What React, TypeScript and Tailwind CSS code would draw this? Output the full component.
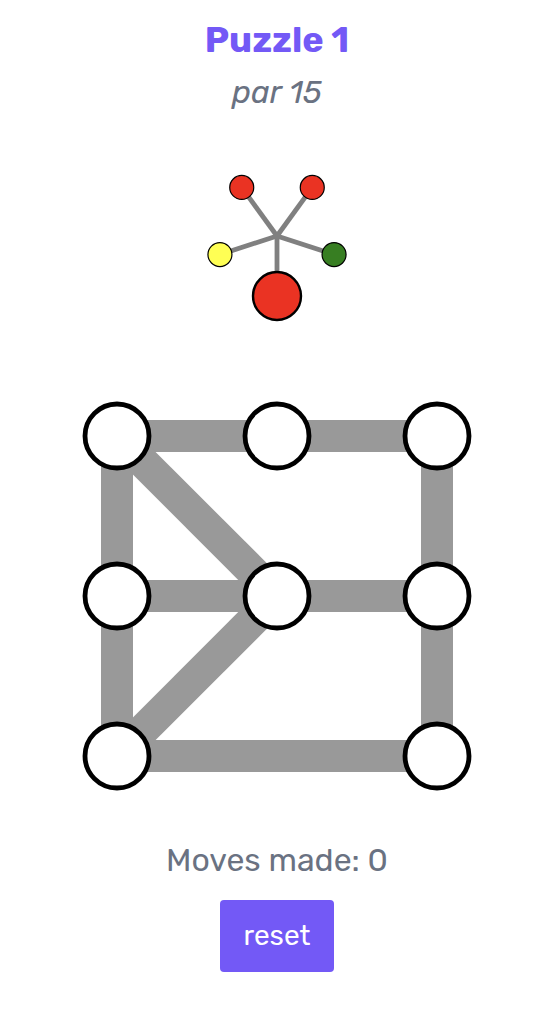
import { useState } from "react";

interface Point { x: number; y: number }

const COLORS: Record<string, string> = {
  red: "#ea3323", green: "#377e22", yellow: "#ffff54",
};

// goal colors, clockwise starting from the bottom
const GOAL = ["red", "yellow", "red", "red", "green"];

const NODES: Point[] = [
  { x: 0, y: 0 }, { x: 1, y: 0 }, { x: 2, y: 0 },
  { x: 0, y: 1 }, { x: 1, y: 1 }, { x: 2, y: 1 },
  { x: 0, y: 2 }, { x: 2, y: 2 },
];

const EDGES: [number, number][] = [
  [0, 1], [1, 2], [0, 3], [0, 4], [3, 4], [4, 5],
  [2, 5], [3, 6], [4, 6], [5, 7], [6, 7],
];

const toBoard = (n: number) => n * 160 + 40;

function GoalWheel() {
  const spokes = GOAL.map((color, i) => {
    const angle = (i * 2 * Math.PI) / GOAL.length;
    return { color, x: 100 - 60 * Math.sin(angle), y: 100 + 60 * Math.cos(angle) };
  });

  return (
    <svg viewBox="0 0 200 200" className="mt-6 w-[200px]" role="img" aria-label="Goal">
      {spokes.map((s, i) => (
        <line key={i} x1={100} y1={100} x2={s.x} y2={s.y} stroke="#808080" strokeWidth={4.8} />
      ))}
      {spokes.map((s, i) => (
        <circle key={i} cx={s.x} cy={s.y} r={i === 0 ? 24 : 12} fill={COLORS[s.color]} stroke="black" strokeWidth={i === 0 ? 2.4 : 1.2} />
      ))}
    </svg>
  );
}

function Board() {
  return (
    <svg viewBox="0 0 400 400" className="mt-[60px] w-full max-w-[400px]" role="img" aria-label="Board">
      {EDGES.map(([a, b]) => (
        <line
          key={`${a}-${b}`}
          x1={toBoard(NODES[a].x)} y1={toBoard(NODES[a].y)}
          x2={toBoard(NODES[b].x)} y2={toBoard(NODES[b].y)}
          stroke="#999999" strokeWidth={32}
        />
      ))}
      {NODES.map((n, i) => (
        <circle key={i} cx={toBoard(n.x)} cy={toBoard(n.y)} r={32} fill="white" stroke="black" strokeWidth={4.8} />
      ))}
    </svg>
  );
}

export default function App() {
  const [moves, setMoves] = useState(0);

  return (
    <main className="flex min-h-screen flex-col items-center bg-white pt-5 pb-14 pl-4 font-['Rubik','Roboto',sans-serif] text-gray-500">
      <h1 className="text-4xl leading-10 font-bold text-[#7359f6]">Puzzle 1</h1>
      <p className="mt-3 text-[32px] leading-10 italic">par 15</p>
      <GoalWheel />
      <Board />
      <p className="mt-11 text-[32px] leading-10">Moves made: {moves}</p>
      <button
        type="button"
        onClick={() => setMoves(0)}
        className="mt-5 rounded-sm bg-[#7359f6] px-6 py-4 text-[28px] leading-10 text-white"
      >
        reset
      </button>
    </main>
  );
}
